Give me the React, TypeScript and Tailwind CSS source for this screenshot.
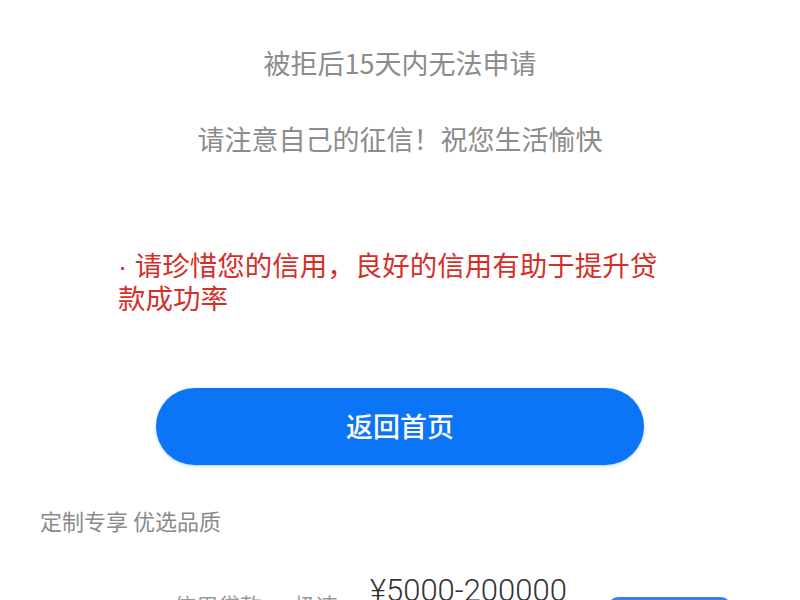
import React from "react";

const cjk = { fontFamily: '"Noto Sans CJK SC", "Noto Sans", sans-serif' };

export default function App() {
  return (
    <div className="w-[800px] h-[600px] overflow-hidden bg-white flex flex-col" style={cjk}>
      {/* title, scrolled mostly out of view */}
      <div className="h-[6px] overflow-hidden flex justify-center items-end pl-[20px]">
        <span className="text-[27px] leading-[34px] text-[#ececec] shrink-0">审核未通过</span>
      </div>

      <p className="mt-[46px] text-center text-[27px] leading-[34px] text-[#8c8c8c]">被拒后15天内无法申请</p>
      <p className="mt-[42px] text-center text-[27px] leading-[34px] text-[#8c8c8c]">请注意自己的征信！祝您生活愉快</p>

      <p
        className="mt-[94px] pl-[118px] pr-[120px] text-[27.5px] leading-[33px] text-[#d4302a]"
        style={{ fontFamily: '"Liberation Sans", "Noto Sans CJK SC", sans-serif' }}
      >
        · 请珍惜您的信用，良好的信用有助于提升贷款成功率
      </p>

      <div className="mt-[72px] flex justify-center">
        <button className="w-[488px] h-[77px] rounded-full bg-[#0c74f6] text-white text-[27px] font-medium shadow-[0_1px_3px_rgba(12,116,246,0.35)]">
          返回首页
        </button>
      </div>

      <p className="mt-[40px] pl-[40px] text-[22px] leading-[30px] text-[#8a8a8a]">定制专享 优选品质</p>

      <div className="mt-[41px] flex items-start">
        <span className="ml-[174px] mt-[13px] w-[160px] text-[22px] leading-[30px] text-[#9a9a9a] whitespace-nowrap">信用贷款 · 极速</span>
        <span className="ml-[36px] -mt-[3px] text-[31px] leading-[36px] text-[#333]" style={{ fontFamily: '"Roboto", "Noto Sans", sans-serif', fontWeight: 300 }}>
          ¥5000-200000
        </span>
        <div className="ml-auto mr-[69px] mt-[21px] w-[123px] h-[40px] rounded-[10px] bg-[#3b7ff2]" />
      </div>
    </div>
  );
}
